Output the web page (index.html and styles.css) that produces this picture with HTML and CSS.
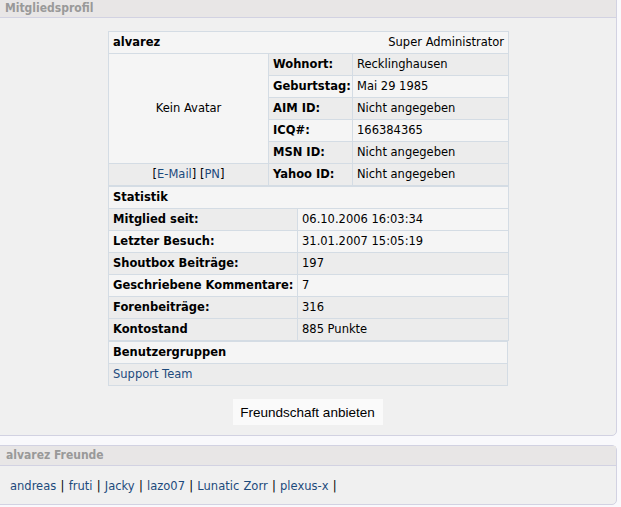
FILE: index.html
```html
<!DOCTYPE html>
<html>
<head>
<meta charset="utf-8">
<link rel="stylesheet" href="styles.css">
</head>
<body>
<div class="panel panel-profile">
  <div class="panel-head">Mitgliedsprofil</div>
  <div class="panel-body">
    <div class="profile">
      <table class="tbl">
        <colgroup><col class="c-avatar"><col class="c-label"><col class="c-value"></colgroup>
        <tr class="light">
          <td colspan="3"><div class="userrow"><span class="b">alvarez</span><span>Super Administrator</span></div></td>
        </tr>
        <tr>
          <td rowspan="5" class="center light">Kein Avatar</td>
          <td class="b dark">Wohnort:</td><td class="dark">Recklinghausen</td>
        </tr>
        <tr class="light"><td class="b">Geburtstag:</td><td>Mai 29 1985</td></tr>
        <tr class="dark"><td class="b">AIM ID:</td><td>Nicht angegeben</td></tr>
        <tr class="light"><td class="b">ICQ#:</td><td>166384365</td></tr>
        <tr class="dark"><td class="b">MSN ID:</td><td>Nicht angegeben</td></tr>
        <tr class="dark">
          <td class="center">[<a href="#">E-Mail</a>] [<a href="#">PN</a>]</td>
          <td class="b">Yahoo ID:</td><td>Nicht angegeben</td>
        </tr>
      </table>
      <table class="tbl">
        <colgroup><col class="c-slabel"><col class="c-svalue"></colgroup>
        <tr class="light"><td colspan="2" class="b">Statistik</td></tr>
        <tr><td class="b dark">Mitglied seit:</td><td class="light">06.10.2006 16:03:34</td></tr>
        <tr><td class="b light">Letzter Besuch:</td><td class="light">31.01.2007 15:05:19</td></tr>
        <tr class="dark"><td class="b">Shoutbox Beiträge:</td><td>197</td></tr>
        <tr class="light"><td class="b">Geschriebene Kommentare:</td><td>7</td></tr>
        <tr class="dark"><td class="b">Forenbeiträge:</td><td>316</td></tr>
        <tr class="dark"><td class="b">Kontostand</td><td>885 Punkte</td></tr>
      </table>
      <table class="tbl">
        <tr class="light"><td class="b">Benutzergruppen</td></tr>
        <tr class="dark"><td><a href="#">Support Team</a></td></tr>
      </table>
    </div>
    <div class="actions">
      <button class="btn" type="button">Freundschaft anbieten</button>
    </div>
  </div>
</div>
<div class="panel panel-friends">
  <div class="panel-head">alvarez Freunde</div>
  <div class="panel-body friends">
    <a href="#">andreas</a> | <a href="#">fruti</a> | <a href="#">Jacky</a> | <a href="#">lazo07</a> | <a href="#">Lunatic Zorr</a> | <a href="#">plexus-x</a> |
  </div>
</div>
</body>
</html>
```

FILE: styles.css
```css
html, body {
  margin: 0;
  padding: 0;
  background: #f9f9fc;
}
body {
  font-family: "DejaVu Sans", Verdana, sans-serif;
  font-size: 11.5px;
  color: #000;
  width: 621px;
  height: 507px;
  overflow: hidden;
}
a {
  color: #1c4a7c;
  text-decoration: none;
}
.panel {
  width: 623px;
  margin-left: -6px;
  border: 1px solid #d2d2e2;
  background: #f0f0f0;
  box-sizing: border-box;
}
.panel-profile {
  margin-top: -1px;
  border-radius: 0 0 5px 5px;
}
.panel-friends {
  margin-top: 9px;
  border-radius: 5px;
}
.panel-head {
  background: #e8e6e6;
  border-bottom: 1px solid #d2d2e2;
  color: #999;
  font-family: "DejaVu Sans Condensed", "DejaVu Sans", sans-serif;
  font-weight: bold;
  font-size: 12px;
  padding-left: 10px;
  height: 17px;
  line-height: 17px;
}
.panel-friends .panel-head {
  height: 19px;
  line-height: 19px;
  padding-left: 11px;
}
.panel-profile .panel-body {
  padding: 13px 0 10px 0;
}
.profile {
  width: 400px;
  margin-left: 113px;
}
.tbl {
  width: 400px;
  border-collapse: collapse;
  table-layout: fixed;
}
.tbl td {
  border: 1px solid #d4dce4;
  padding: 4px 4px;
  line-height: 13px;
  height: 13px;
  white-space: nowrap;
  overflow: hidden;
}
.userrow {
  display: flex;
  justify-content: space-between;
}
.c-avatar { width: 160px; }
.c-label { width: 84px; }
.c-value { width: 156px; }
.c-slabel { width: 189px; }
.c-svalue { width: 211px; }
.b { font-weight: bold; }
.center { text-align: center; }
.light, .light td { background: #f5f5f5; }
.dark, .dark td { background: #ececec; }
td.light { background: #f5f5f5; }
td.dark { background: #ececec; }
.actions {
  display: flex;
  justify-content: center;
  margin-top: 13px;
  margin-left: 4px;
}
.btn {
  font-family: "Liberation Sans", Arial, sans-serif;
  font-size: 13.5px;
  background: #fafafa;
  border: none;
  padding: 0 6px;
  height: 26px;
  width: 150px;
  color: #000;
}
.friends {
  padding: 14px 0 11px 15px;
  line-height: 13px;
  height: 13px;
  word-spacing: 0.6px;
}
```
